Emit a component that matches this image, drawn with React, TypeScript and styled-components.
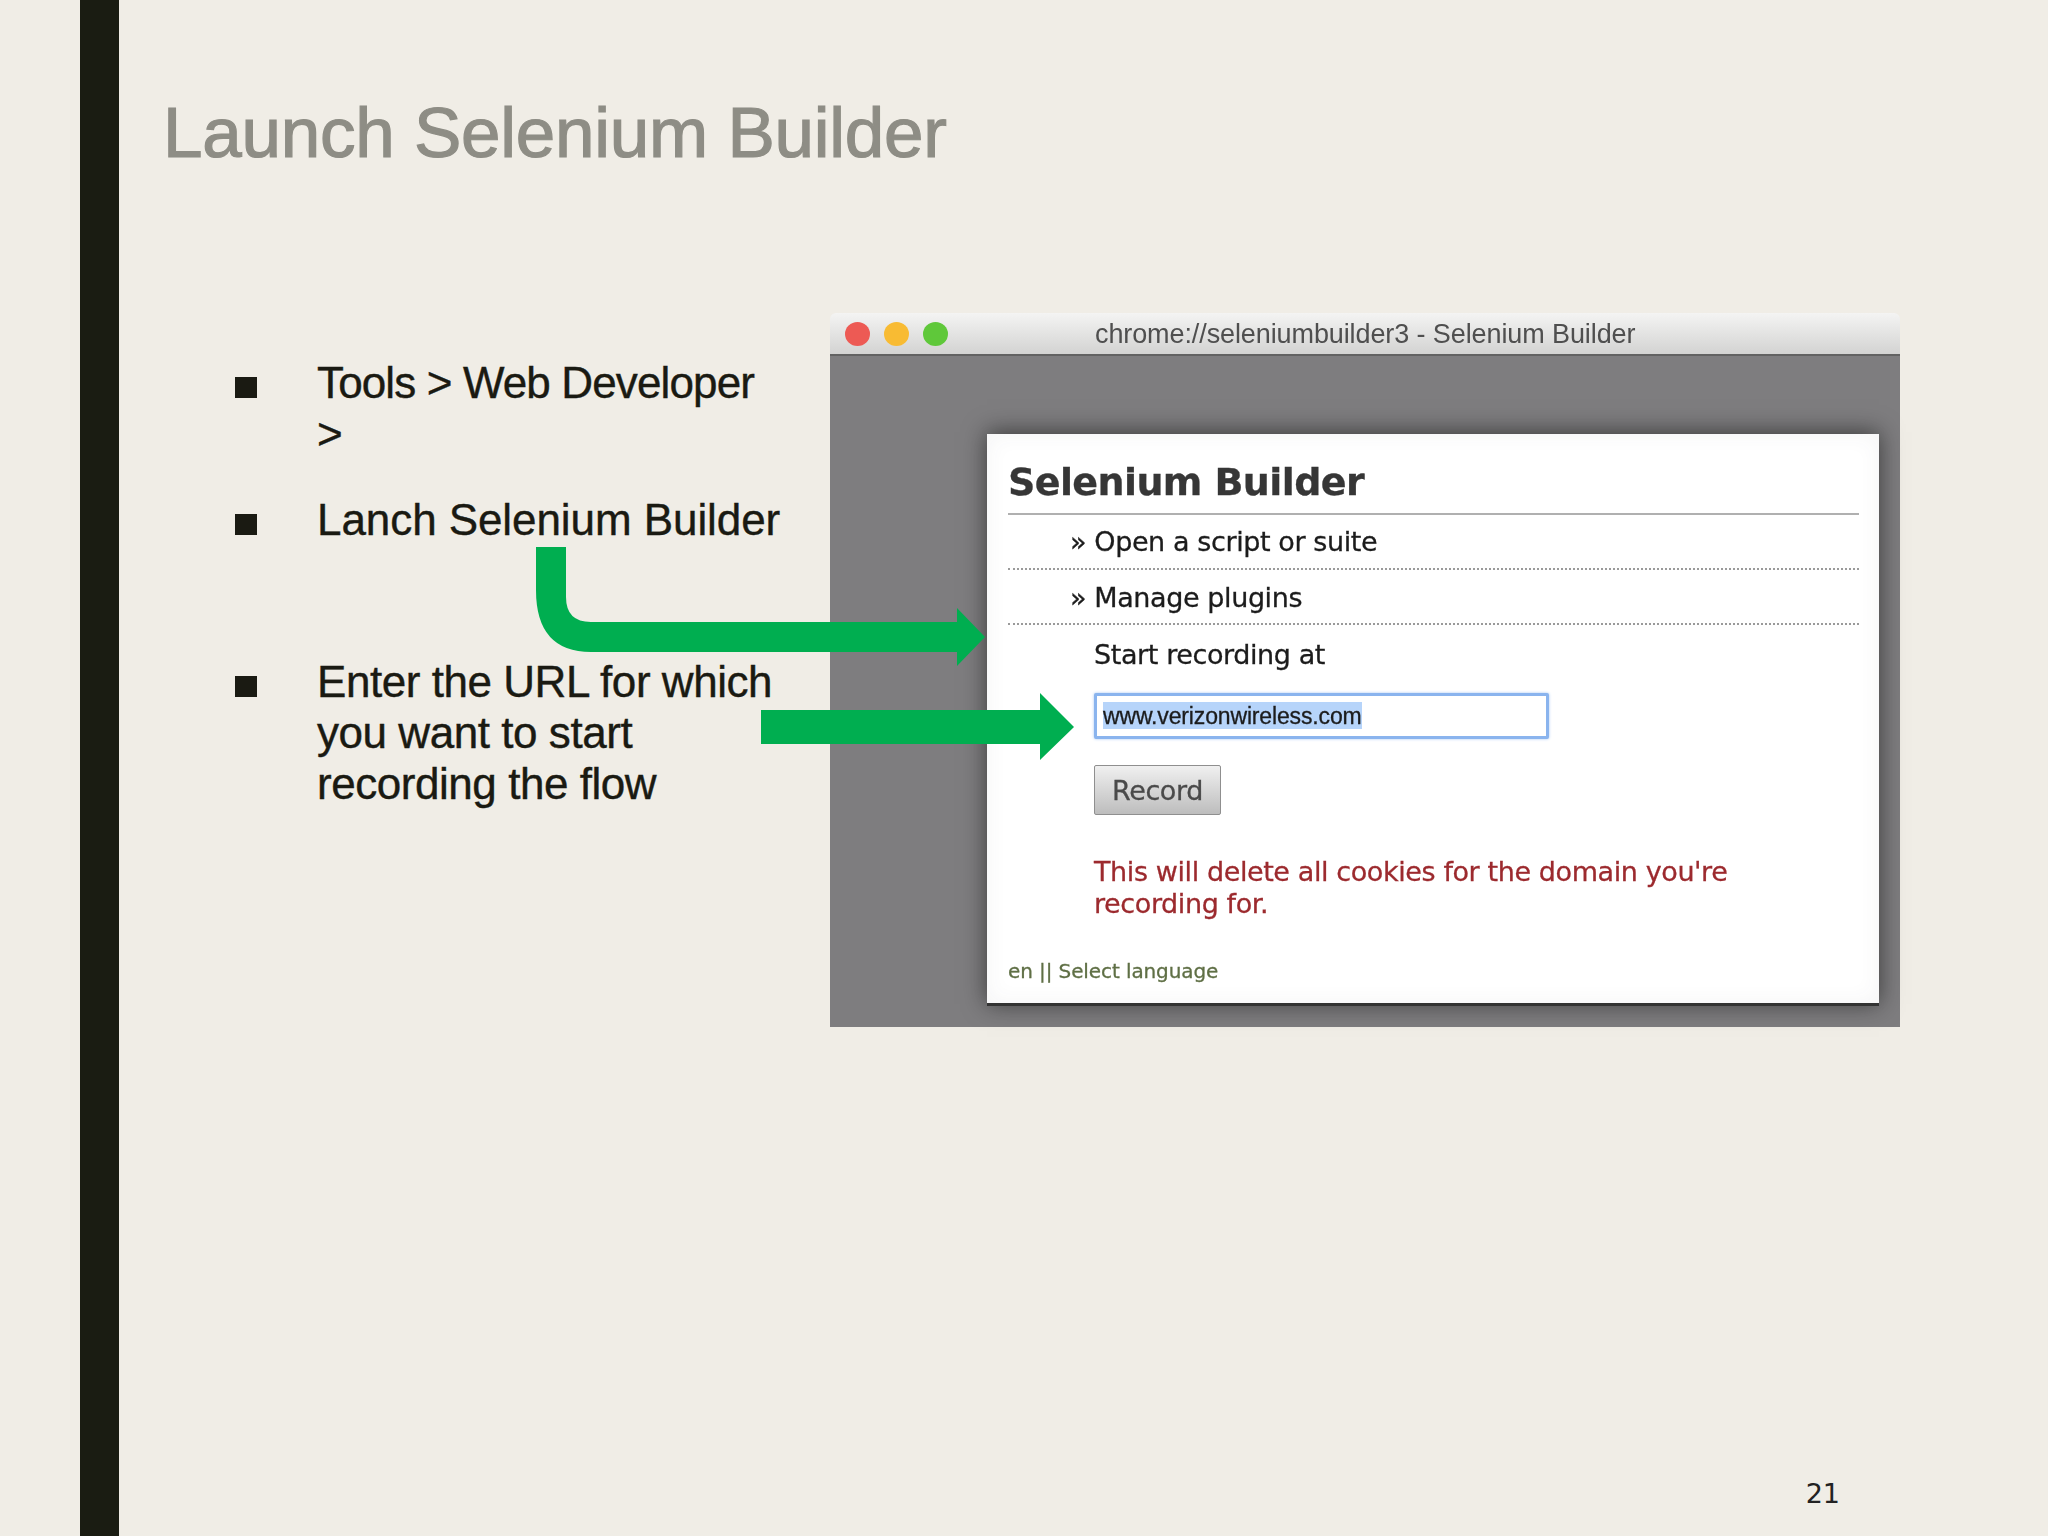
import styled, { createGlobalStyle } from "styled-components";

const GlobalStyle = createGlobalStyle`
	html, body {
		margin: 0;
		padding: 0;
		background-color: #f0ede6;
	}
`

type ListItemPropsType = {
	gap: number
	tracking: number
	text: string
}

function ListItem(props: ListItemPropsType) {
	return (
		<Item $gap={props.gap}>
			<Bullet />
			<ItemText $tracking={props.tracking}>{props.text}</ItemText>
		</Item>
	)
}

function Arrows() {
	return (
		<ArrowLayer viewBox="0 0 2048 1536">
			<path
				d="M536 547 H566 V597 Q566 622 591 622 H957 V608 L985 637 L957 666 V652 H591 Q536 652 536 590 Z"
				fill="#00ae50"
			/>
			<path d="M761 710 H1040 V693 L1074 727 L1040 760 V744 H761 Z" fill="#00ae50" />
		</ArrowLayer>
	)
}

export default function App() {
	return (
		<Slide>
			<GlobalStyle />
			<SideBar />
			<Main>
				<Title>Launch Selenium Builder</Title>
				<Content>
					<List>
						<ListItem gap={35} tracking={-0.87} text="Tools > Web Developer >" />
						<ListItem gap={111} tracking={-0.07} text="Lanch Selenium Builder" />
						<ListItem gap={0} tracking={-0.45} text="Enter the URL for which you want to start recording the flow" />
					</List>
					<Window>
						<TitleBar>
							<Light $color="#ed5a54" />
							<Light $color="#f8bb33" />
							<Light $color="#5fc83a" />
							<WindowTitle>chrome://seleniumbuilder3 - Selenium Builder</WindowTitle>
						</TitleBar>
						<WindowBody>
							<Panel>
								<Heading>Selenium Builder</Heading>
								<MenuRow $textShift={-2}>» Open a script or suite</MenuRow>
								<MenuRow $textShift={0}>» Manage plugins</MenuRow>
								<Form>
									<FormLabel>Start recording at</FormLabel>
									<UrlField>
										<Selection>www.verizonwireless.com</Selection>
									</UrlField>
									<RecordButton>Record</RecordButton>
									<Warning>This will delete all cookies for the domain you're recording for.</Warning>
								</Form>
								<Footer>en || Select language</Footer>
							</Panel>
						</WindowBody>
					</Window>
				</Content>
				<PageNumber>21</PageNumber>
			</Main>
			<Arrows />
		</Slide>
	)
}

const Slide = styled.div`
	position: relative;
	display: flex;
	width: 2048px;
	height: 1536px;
	padding-left: 80px;
	box-sizing: border-box;
	overflow: hidden;
	background-color: #f0ede6;
	font-family: "Liberation Sans", Arial, sans-serif;
`

const SideBar = styled.div`
	flex: 0 0 39px;
	background-color: #1a1c12;
`

const Main = styled.main`
	flex: 1;
	display: flex;
	flex-direction: column;
	padding-left: 46px;
	min-width: 0;
`

const Title = styled.h1`
	height: 313px;
	margin: 0 0 0 -2px;
	padding-top: 93px;
	box-sizing: border-box;
	color: #8e8d85;
	font-size: 71px;
	font-weight: 400;
	line-height: 80px;
	letter-spacing: -0.25px;
	-webkit-text-stroke: 1.2px #8e8d85;
`

const Content = styled.div`
	display: flex;
	padding-left: 70px;
`

const List = styled.ul`
	flex: 0 0 595px;
	margin: 0;
	padding: 44px 0 0;
	list-style: none;
`

const Item = styled.li<{ $gap: number }>`
	display: flex;
	margin-bottom: ${(props) => props.$gap}px;
`

const Bullet = styled.span`
	flex: 0 0 22px;
	height: 21px;
	margin: 20px 60px 0 0;
	background-color: #1a1a12;
`

const ItemText = styled.span<{ $tracking: number }>`
	width: 470px;
	color: #1a1a12;
	font-size: 44px;
	line-height: 51px;
	letter-spacing: ${(props) => props.$tracking}px;
	-webkit-text-stroke: 0.4px #1a1a12;
`

const Window = styled.div`
	flex: 0 0 1070px;
	display: flex;
	flex-direction: column;
	height: 714px;
	filter: blur(0.5px);
`

const TitleBar = styled.div`
	display: flex;
	align-items: center;
	flex: 0 0 43px;
	padding-left: 15px;
	box-sizing: border-box;
	border-radius: 6px 6px 0 0;
	border-bottom: 2px solid #626262;
	background: linear-gradient(#f4f4f3, #d3d3d2);
`

const Light = styled.span<{ $color: string }>`
	flex: 0 0 25px;
	height: 24px;
	margin-right: 14px;
	border-radius: 50%;
	background-color: ${(props) => props.$color};
`

const WindowTitle = styled.span`
	margin: 2px 0 0 133px;
	color: #4f4f4f;
	font-size: 27px;
	letter-spacing: -0.1px;
	white-space: nowrap;
`

const WindowBody = styled.div`
	flex: 1;
	display: flex;
	padding: 78px 21px 21px 157px;
	box-sizing: border-box;
	background-color: #7e7d7f;
`

const Panel = styled.div`
	flex: 1;
	display: flex;
	flex-direction: column;
	padding: 0 20px 0 21px;
	box-sizing: border-box;
	background-color: #fff;
	border-bottom: 3px solid #333;
	box-shadow: 0 -2px 22px rgba(30, 30, 30, 0.7), inset 0 0 22px rgba(60, 60, 80, 0.06);
	font-family: "DejaVu Sans", Verdana, sans-serif;
	letter-spacing: -0.4px;
	-webkit-text-stroke: 0.3px currentColor;
`

const Heading = styled.h2`
	height: 81px;
	margin: 0;
	box-sizing: border-box;
	border-bottom: 2px solid #b0b0b0;
	color: #363636;
	font-size: 38px;
	font-weight: 700;
	line-height: 79px;
	padding-top: 9px;
	letter-spacing: -0.6px;
`

const MenuRow = styled.div<{ $textShift: number }>`
	height: 55px;
	padding-left: 62px;
	box-sizing: border-box;
	border-bottom: 2px dotted #9a9a9a;
	color: #1c1c1c;
	font-size: 27px;
	line-height: ${(props) => 55 + props.$textShift}px;
`

const Form = styled.div`
	display: flex;
	flex-direction: column;
	align-items: flex-start;
	padding-left: 86px;
`

const FormLabel = styled.div`
	height: 68px;
	color: #1c1c1c;
	font-size: 27px;
	line-height: 60px;
`

const UrlField = styled.div`
	width: 455px;
	height: 46px;
	padding: 6px 0 0 6px;
	box-sizing: border-box;
	border: 3px solid #8ab4ee;
	border-radius: 2px;
	background-color: #fff;
	box-shadow: 0 0 3px #a5c6f3;
`

const Selection = styled.span`
	display: inline-block;
	height: 27px;
	background-color: #b6d4fa;
	color: #1c1c1c;
	font-family: "Liberation Sans", Arial, sans-serif;
	font-size: 23px;
	line-height: 29px;
	letter-spacing: -0.15px;
`

const RecordButton = styled.button`
	width: 127px;
	height: 50px;
	margin-top: 26px;
	padding: 0;
	border: 1px solid #8f8f8f;
	border-radius: 2px;
	background: linear-gradient(#f0f0f0, #bdbdbd);
	color: #4a4a4a;
	font-family: "DejaVu Sans", Verdana, sans-serif;
	font-size: 27px;
	letter-spacing: -0.4px;
	-webkit-text-stroke: 0.3px #4a4a4a;
`

const Warning = styled.p`
	width: 680px;
	margin: 41px 0 0;
	color: #9c2a2e;
	font-size: 27px;
	line-height: 32px;
`

const Footer = styled.div`
	margin-top: auto;
	padding-bottom: 17px;
	color: #5f6f45;
	font-size: 20px;
	line-height: 30px;
	letter-spacing: -0.1px;
`

const PageNumber = styled.div`
	margin: auto 208px 24px 0;
	align-self: flex-end;
	color: #222;
	font-family: "DejaVu Sans", sans-serif;
	font-size: 27px;
	line-height: 36px;
`

const ArrowLayer = styled.svg`
	position: absolute;
	top: 0;
	left: 0;
	width: 2048px;
	height: 1536px;
	pointer-events: none;
`
